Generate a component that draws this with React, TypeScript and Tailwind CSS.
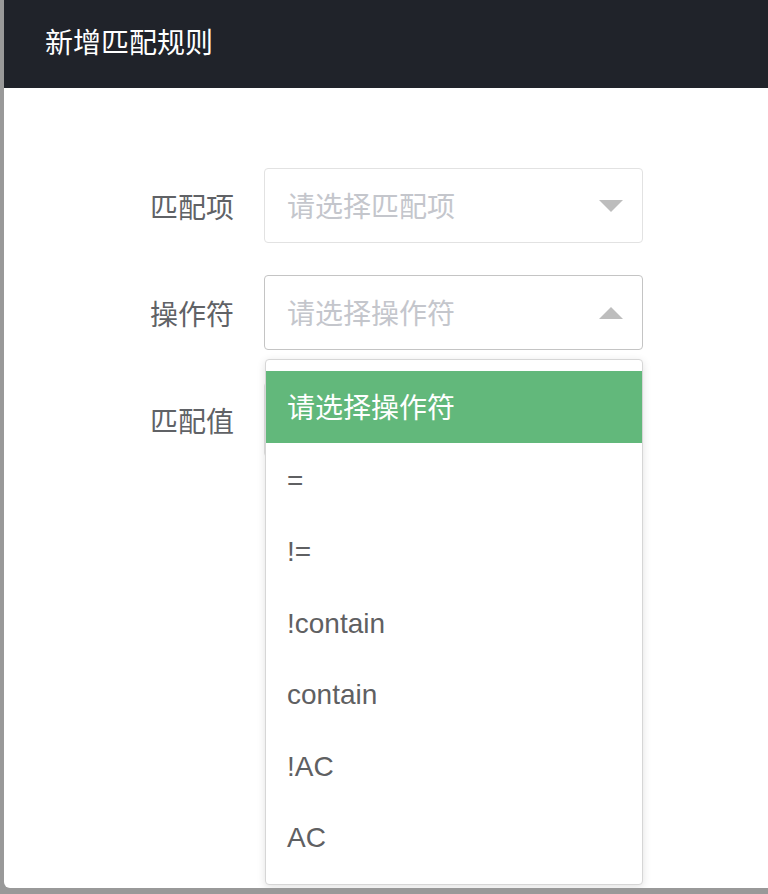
const options = ["请选择操作符", "=", "!=", "!contain", "contain", "!AC", "AC"];

function Arrow({ up }: { up?: boolean }) {
  return (
    <svg width="24" height="12" viewBox="0 0 24 12" className="shrink-0">
      {up ? (
        <polygon points="0,12 24,12 12,0" fill="#bdbdbd" />
      ) : (
        <polygon points="0,0 24,0 12,12" fill="#bdbdbd" />
      )}
    </svg>
  );
}

function FormRow({
  label,
  placeholder,
  open,
  hidden,
}: {
  label: string;
  placeholder: string;
  open?: boolean;
  hidden?: boolean;
}) {
  return (
    <div className="flex items-center">
      <div className="w-[140px] pr-[30px] pt-[6px] text-right text-[28px] text-[#606266]">{label}</div>
      <div className="relative w-[379px]">
        <div
          className={`flex h-[75px] items-center justify-between rounded-[4px] border bg-white pl-[22px] pr-[19px] ${
            open ? "border-[#c4c4c4]" : "border-[#e2e2e2]"
          }`}
        >
          <span className="pt-[5px] text-[28px] text-[#c4c6cc]">{hidden ? "" : placeholder}</span>
          {!hidden && <Arrow up={open} />}
        </div>
        {open && (
          <div className="absolute left-px right-0 top-full z-10 mt-[9px] rounded-[4px] border border-[#d6d6d6] bg-white pt-[11px] pb-[12px] shadow-[0_2px_8px_rgba(0,0,0,0.12)]">
            {options.map((o, i) => (
              <div
                key={o}
                className={`flex h-[71.5px] items-center px-[21px] pt-[5px] text-[28px] ${
                  i === 0 ? "bg-[#62b87b] text-white" : "text-[#5f6062]"
                }`}
              >
                {o}
              </div>
            ))}
          </div>
        )}
      </div>
    </div>
  );
}

export default function App() {
  return (
    <div
      className="flex h-[894px] w-[768px] overflow-hidden bg-[#999999]"
      style={{ fontFamily: '"Liberation Sans", "Noto Sans CJK SC", sans-serif' }}
    >
      <div className="ml-[4px] flex h-[888px] flex-1 flex-col overflow-hidden rounded-bl-[6px] bg-white">
        <div className="flex h-[88px] shrink-0 items-center bg-[#20232a] pl-[41px] text-[28px] text-white">
          新增匹配规则
        </div>
        <div className="flex flex-col gap-[32px] pl-[120px] pt-[80px]">
          <FormRow label="匹配项" placeholder="请选择匹配项" />
          <FormRow label="操作符" placeholder="请选择操作符" open />
          <FormRow label="匹配值" placeholder="" hidden />
        </div>
      </div>
    </div>
  );
}
